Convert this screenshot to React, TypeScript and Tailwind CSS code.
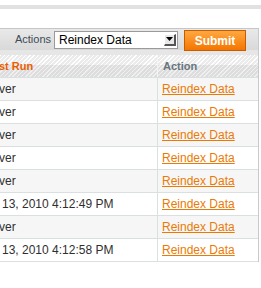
import React from 'react';

// rows of the index grid, only the right part of the first column shows
const rows: string[] = [
  'ver',
  'ver',
  'ver',
  'ver',
  'ver',
  '13, 2010 4:12:49 PM',
  'ver',
  '13, 2010 4:12:58 PM',
];

const SelectArrow: React.FC = () => (
  <span className="flex h-[12px] w-[12px] items-center justify-center border-r-2 border-b-2 border-r-[#555] border-b-[#555] bg-[#e8e8e8] border-t border-l border-t-[#fff] border-l-[#fff]">
    <svg width="7" height="4" viewBox="0 0 7 4">
      <path d="M0 0 L7 0 L3.5 4 Z" fill="#000" />
    </svg>
  </span>
);

export default function App() {
  return (
    <div className="h-[288px] w-[261px] overflow-hidden bg-white font-['Liberation_Sans',Arial,sans-serif]">
      {/* top strip */}
      <div className="mt-[5px] h-[4px] bg-[#e1e1e1]" />

      <div className="mt-[19px] mr-[2px] border-r border-[#c9c9c9]">
        {/* mass action toolbar */}
        <div className="flex h-[22px] items-center justify-end border-t border-[#c6c6c6] bg-[linear-gradient(to_bottom,#e9e9e9,#d9d9d9)] pr-[12px]">
          <span className="mr-[3px] text-[11px] text-[#3d4b55]">Actions</span>
          <div className="flex h-[18px] w-[124px] items-center justify-between border border-[#9a9a9a] bg-white pl-[4px] pr-[1px]">
            <span className="text-[12px] text-black">Reindex Data</span>
            <SelectArrow />
          </div>
          <button className="ml-[6px] mt-[2px] h-[21px] w-[62px] border border-[#c95b00] bg-[linear-gradient(to_bottom,#ffa841,#f47600)] text-[12px] font-bold text-white">
            Submit
          </button>
        </div>
        <div className="h-[5px] bg-[#e6e6e6]" />

        {/* header */}
        <div className="flex h-[22px] bg-[linear-gradient(to_bottom,rgba(255,255,255,0)_45%,rgba(0,0,0,0.06)_45%),repeating-linear-gradient(135deg,#ffffff_0,#ffffff_1px,#ebebeb_1px,#ebebeb_3px)] text-[11px] font-bold">
          <div className="flex w-[158px] items-center border-r border-[#f4f4f4] pl-0 text-[#eb5e00]">
            <span className="-ml-[1px]">st Run</span>
          </div>
          <div className="flex flex-1 items-center pl-[5px] text-[#67767e]">Action</div>
        </div>

        {/* body */}
        {rows.map((r, i) => (
          <div
            key={i}
            className={`flex h-[23px] border-t border-[#dadfe0] text-[12px] ${i % 2 === 0 ? 'bg-[#f6f6f6]' : 'bg-white'}`}
          >
            <div className="flex w-[158px] items-center border-r border-[#dadfe0] text-[#2f2f2f]">
              <span className={r === 'ver' ? '-ml-[1px]' : 'ml-[2px]'}>{r}</span>
            </div>
            <div className="flex flex-1 items-center pl-[4px]">
              <a className="text-[#eb7a05] underline">Reindex Data</a>
            </div>
          </div>
        ))}
        <div className="border-t border-[#dadfe0]" />
      </div>
    </div>
  );
}
